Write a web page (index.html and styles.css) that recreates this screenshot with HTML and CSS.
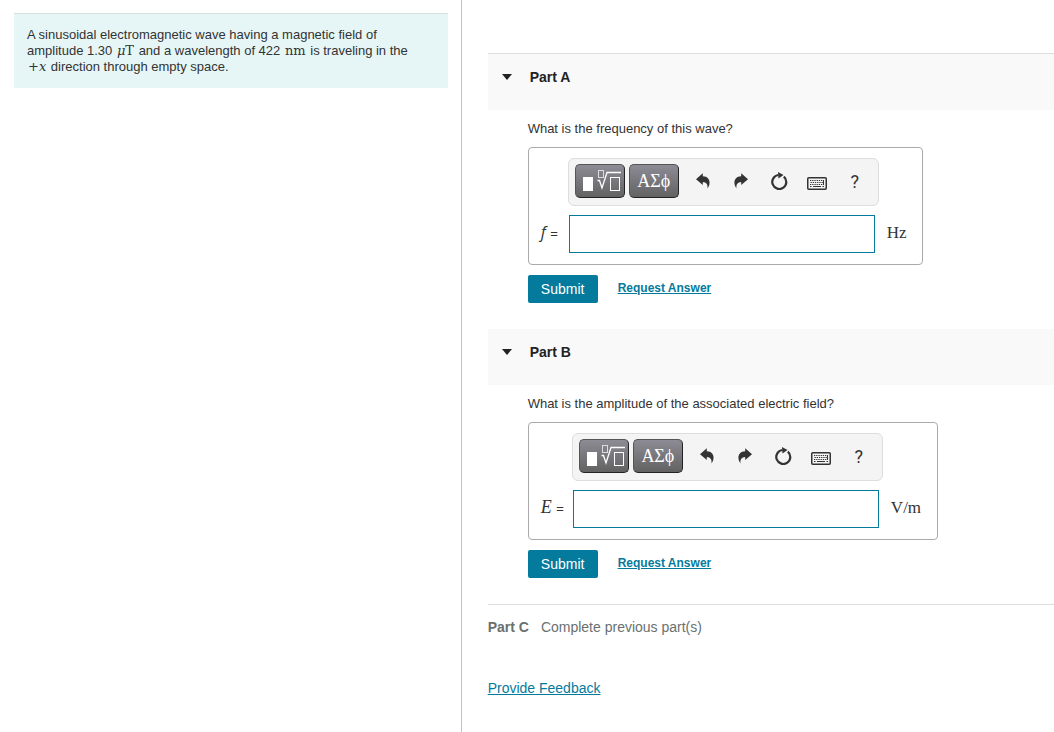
FILE: index.html
```html
<!DOCTYPE html>
<html lang="en">
<head>
  <meta charset="UTF-8">
  <title>Electromagnetic Wave</title>
  <link rel="stylesheet" href="styles.css">
</head>
<body>

<svg class="sprite" aria-hidden="true">
  <symbol id="icon-template" viewBox="0 0 38 24">
    <rect x="0" y="10" width="10" height="14" fill="#fff"/>
    <rect x="15.5" y="3.5" width="5" height="7" fill="none" stroke="#ddd"/>
    <path d="M14.500 13.500h2l2.500 7.500L24 5.500H38" fill="none" stroke="#fff" stroke-width="1.300"/>
    <rect x="27.500" y="10.500" width="9" height="13" fill="none" stroke="#fff"/>
  </symbol>
  <symbol id="icon-undo" viewBox="0 0 14 16">
    <path d="M0 6.300L6.800 0.300V3.200C11.500 3.200 14 6.500 13.500 10.500C13.300 12.500 12.500 14 11.500 15.500C12 11.500 10.500 9.300 6.800 9V12Z" fill="#333"/>
  </symbol>
  <symbol id="icon-reset" viewBox="0 0 18 18">
    <path d="M13.800 4.600A7 7 0 1 1 8.500 3" fill="none" stroke="#333" stroke-width="2.200"/>
    <path d="M8 0L13.500 3L8.500 6.500Z" fill="#333"/>
  </symbol>
  <symbol id="icon-keyboard" viewBox="0 0 20 13">
    <rect x="0.750" y="0.750" width="18.500" height="11.500" rx="1" fill="none" stroke="#333" stroke-width="1.500"/>
    <path d="M3 3.500H17M3.500 5.500H17M3 7.500H17" fill="none" stroke="#333" stroke-width="1.200" stroke-dasharray="1.300 0.900"/>
    <path d="M6 9.500H14M3 9.500H4.500M15.500 9.500H17" stroke="#333"/>
    <path d="M16.500 3V8" stroke="#333"/>
  </symbol>
</svg>

<div class="page">
  <div class="left">
    <div class="problem">
      A sinusoidal electromagnetic wave having a magnetic field of amplitude 1.30 <span class="math"><i>μ</i>T</span> and a wavelength of 422 <span class="math">nm</span> is traveling in the <span class="math">+<i>x</i></span> direction through empty space.
    </div>
  </div>

  <div class="right">
    <section class="part first">
      <h2 class="part-header"><span class="arrow"></span>Part A</h2>
      <div class="part-body">
        <p class="question">What is the frequency of this wave?</p>
        <div class="answer">
          <div class="toolbar">
            <button type="button" class="dark" aria-label="Templates"><svg width="38" height="24"><use href="#icon-template"/></svg></button>
            <button type="button" class="dark greek">ΑΣϕ</button>
            <button type="button" class="tool" aria-label="Undo"><svg width="14" height="16"><use href="#icon-undo"/></svg></button>
            <button type="button" class="tool" aria-label="Redo"><svg class="flip" width="14" height="16"><use href="#icon-undo"/></svg></button>
            <button type="button" class="tool" aria-label="Reset"><svg width="18" height="18"><use href="#icon-reset"/></svg></button>
            <button type="button" class="tool keys" aria-label="Keyboard shortcuts"><svg width="20" height="13"><use href="#icon-keyboard"/></svg></button>
            <button type="button" class="tool help">?</button>
          </div>
          <label for="frequency"><i class="sans">f</i> =</label>
          <input type="text" id="frequency">
          <span class="unit">Hz</span>
        </div>
        <div class="actions">
          <button type="button" class="submit">Submit</button>
          <a href="#" class="request">Request Answer</a>
        </div>
      </div>
    </section>

    <section class="part">
      <h2 class="part-header"><span class="arrow"></span>Part B</h2>
      <div class="part-body">
        <p class="question">What is the amplitude of the associated electric field?</p>
        <div class="answer">
          <div class="toolbar">
            <button type="button" class="dark" aria-label="Templates"><svg width="38" height="24"><use href="#icon-template"/></svg></button>
            <button type="button" class="dark greek">ΑΣϕ</button>
            <button type="button" class="tool" aria-label="Undo"><svg width="14" height="16"><use href="#icon-undo"/></svg></button>
            <button type="button" class="tool" aria-label="Redo"><svg class="flip" width="14" height="16"><use href="#icon-undo"/></svg></button>
            <button type="button" class="tool" aria-label="Reset"><svg width="18" height="18"><use href="#icon-reset"/></svg></button>
            <button type="button" class="tool keys" aria-label="Keyboard shortcuts"><svg width="20" height="13"><use href="#icon-keyboard"/></svg></button>
            <button type="button" class="tool help">?</button>
          </div>
          <label for="amplitude"><i>E</i> =</label>
          <input type="text" id="amplitude">
          <span class="unit">V/m</span>
        </div>
        <div class="actions">
          <button type="button" class="submit">Submit</button>
          <a href="#" class="request">Request Answer</a>
        </div>
      </div>
    </section>

    <p class="locked"><b>Part C</b>Complete previous part(s)</p>
    <a href="#" class="feedback">Provide Feedback</a>
  </div>
</div>

</body>
</html>
```
FILE: styles.css
```css
* {
  box-sizing: border-box;
}
body {
  margin: 0;
  font-family: "Liberation Sans", Arial, sans-serif;
  font-size: 13px;
  line-height: 16px;
  color: #333;
  background-color: #fff;
}
button {
  font-family: inherit;
  padding: 0;
  border: none;
  cursor: pointer;
}
a {
  color: #047a9c;
}
.sprite {
  display: none;
}
.page {
  display: flex;
  min-height: 100vh;
}
.left {
  width: 43.8%;
  padding: 13px 13px 13px 14px;
  border-right: 1px solid #bcc3cc;
}
.problem {
  padding: 13px 30px 13px 13px;
  background-color: #e6f6f7;
  border-top: 1px solid #d5dfe0;
}
.math {
  margin: 0 1px;
  font-family: "DejaVu Serif", serif;
  font-size: 13px;
  line-height: 14px;
}
.right {
  flex: 1;
  padding: 53px 0 20px 26px;
}
.part {
  margin-bottom: 26px;
}
.part-header {
  display: flex;
  align-items: center;
  margin: 0;
  height: 56px;
  padding: 0 0 10px 14px;
  font-size: 14px;
  color: #222;
  background-color: #f9f9f9;
}
.first .part-header {
  height: 57px;
  border-top: 1px solid #ddd;
}
.arrow {
  margin-right: 18px;
  border: 5px solid transparent;
  border-top: 6px solid #222;
  border-bottom: none;
}
.part-body {
  padding: 11px 20px 0 40px;
}
.question {
  margin: 0 0 10px;
}
.answer {
  display: inline-grid;
  grid-template-columns: auto 306px auto;
  align-items: center;
  row-gap: 9px;
  padding: 10px 16px 11px 12px;
  border: 1px solid #aaa;
  border-radius: 4px;
  vertical-align: top;
}
.toolbar {
  grid-column: 2 / 4;
  justify-self: start;
  display: flex;
  align-items: center;
  height: 48px;
  margin-left: -1px;
  padding: 0 4px 2px 6px;
  background-color: #f4f4f4;
  border: 1px solid #ddd;
  border-radius: 6px;
}
.dark {
  width: 50px;
  height: 34px;
  margin-right: 4px;
  color: #fff;
  background: linear-gradient(#8d8c95, #626262);
  border: 1px solid #555;
  border-right-color: #222;
  border-bottom-color: #222;
  border-radius: 5px;
}
.dark svg {
  display: block;
  margin: 0 0 4px 7px;
}
.greek {
  margin-right: 5px;
  font-family: "Liberation Serif", "Times New Roman", serif;
  font-size: 18px;
}
.tool {
  width: 38px;
  height: 34px;
  color: #333;
  background: none;
}
.tool svg {
  display: block;
  margin: 0 auto;
}
.flip {
  transform: scaleX(-1);
}
.keys {
  padding-top: 4px;
}
.help {
  font-family: Roboto, sans-serif;
  font-size: 18px;
}
label {
  min-width: 28px;
  padding: 0 9px 3px 0;
}
label i {
  margin-right: 1px;
  font-family: "Liberation Serif", "Times New Roman", serif;
  font-size: 18px;
}
label .sans {
  font-family: "Open Sans", sans-serif;
  font-size: 16px;
}
.answer input {
  width: 100%;
  height: 38px;
  padding: 4px 8px;
  font-size: 16px;
  border: 1px solid #047a9c;
  outline: none;
}
.unit {
  padding: 0 0 2px 12px;
  font-family: "Liberation Serif", "Times New Roman", serif;
  font-size: 17px;
}
.actions {
  display: flex;
  margin-top: 10px;
}
.submit {
  width: 70px;
  height: 28px;
  margin-right: 20px;
  font-size: 14px;
  color: #fff;
  background-color: #047a9c;
  border-radius: 2px;
}
.request {
  padding-top: 5px;
  font-size: 12px;
  font-weight: bold;
}
.locked {
  margin: 0 0 45px;
  padding-top: 14px;
  font-size: 14px;
  color: #6a7070;
  border-top: 1px solid #ddd;
}
.locked b {
  margin-right: 12px;
}
.feedback {
  font-size: 14px;
}
```
